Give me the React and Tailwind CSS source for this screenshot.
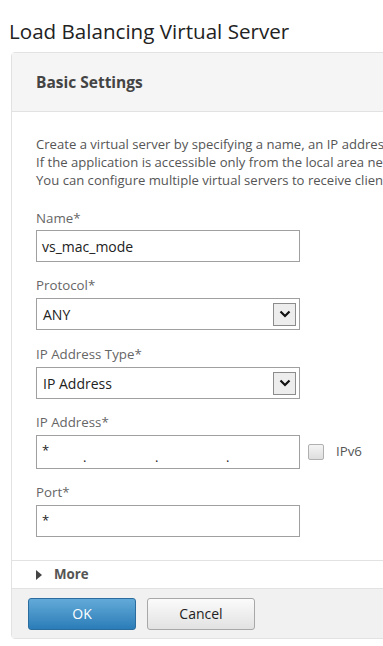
import { useState } from 'react';

function Label({ children }) {
    return <div className="h-[20px] text-[13.3px] leading-[20px] text-[#666]">{children}</div>;
}

function SelectBox({ value }) {
    return (
        <div className="mt-[3px] flex h-[32px] w-[264px] items-center justify-between border border-[#a0a0a0] bg-white pl-[6px] pr-[3px] text-[14px] text-[#222]">
            <span>{value}</span>
            <span className="flex h-[23px] w-[23px] items-center justify-center border border-[#8c8c8c] bg-[#ededed]">
                <svg width="12" height="8" viewBox="0 0 12 8">
                    <path d="M1.5 1.5 L6 6 L10.5 1.5" fill="none" stroke="#111" strokeWidth="2.2" />
                </svg>
            </span>
        </div>
    );
}

export default function App() {
    const [ipv6, setIpv6] = useState(false);

    return (
        <div className="h-[646px] w-[383px] overflow-hidden bg-white font-['Open_Sans',sans-serif]">
            <h1 className="pl-[9px] pt-[17px] text-[20.6px] leading-[28px] text-[#222]">
                Load Balancing Virtual Server
            </h1>

            <div className="ml-[11px] mt-[7px] w-[600px] rounded-[4px] border border-[#e2e2e2]">
                <div className="flex h-[59px] items-center border-b border-[#e2e2e2] bg-[#f5f5f5] pl-[24px] pt-[2px] text-[15.5px] font-bold text-[#444]">
                    Basic Settings
                </div>

                <div className="px-[24px] pb-[23px] pt-[23px]">
                    <div className="whitespace-nowrap text-[13.1px] leading-[18px] text-[#555]">
                        <p>Create a virtual server by specifying a name, an IP address, a port, and a protocol type.</p>
                        <p>If the application is accessible only from the local area network, the virtual server IP address can be private.</p>
                        <p>You can configure multiple virtual servers to receive client requests.</p>
                    </div>

                    <div className="mt-[19px]">
                        <Label>Name*</Label>
                        <div className="mt-[2px] flex h-[32px] w-[264px] items-center border border-[#a0a0a0] pl-[5px] text-[14px] text-[#222]">
                            vs_mac_mode
                        </div>
                    </div>

                    <div className="mt-[13px]">
                        <Label>Protocol*</Label>
                        <SelectBox value="ANY" />
                    </div>

                    <div className="mt-[14px]">
                        <Label>IP Address Type*</Label>
                        <SelectBox value="IP Address" />
                    </div>

                    <div className="mt-[13px]">
                        <Label>IP Address*</Label>
                        <div className="mt-[3px] flex items-center">
                            <div className="relative h-[34px] w-[264px] border border-[#a0a0a0] text-[13px] text-[#222]">
                                <span className="absolute left-[5px] top-[5px]">*</span>
                                <span className="absolute left-[46px] top-[12px]">.</span>
                                <span className="absolute left-[118px] top-[12px]">.</span>
                                <span className="absolute left-[189px] top-[12px]">.</span>
                            </div>
                            <button
                                type="button"
                                onClick={() => setIpv6(!ipv6)}
                                className="ml-[8px] h-[16px] w-[16px] rounded-[2px] border border-[#b0b0b0] bg-gradient-to-b from-[#f4f4f4] to-[#dedede]"
                            />
                            <span className="ml-[12px] text-[13.3px] text-[#555]">IPv6</span>
                        </div>
                    </div>

                    <div className="mt-[13px]">
                        <Label>Port*</Label>
                        <div className="mt-[3px] flex h-[32px] w-[264px] items-center border border-[#a0a0a0] pl-[5px] text-[13px] text-[#222]">
                            *
                        </div>
                    </div>
                </div>

                <div className="flex h-[29px] items-center border-y border-[#e2e2e2] pl-[24px]">
                    <svg width="7" height="10" viewBox="0 0 7 10">
                        <path d="M0 0 L6 5 L0 10 Z" fill="#444" />
                    </svg>
                    <span className="ml-[11px] text-[13.3px] font-bold text-[#555]">More</span>
                </div>

                <div className="flex h-[49px] items-center gap-[11px] bg-[#f1f1f1] pl-[16px]">
                    <button
                        type="button"
                        className="h-[32px] w-[108px] rounded-[3px] border border-[#2a6c9e] bg-gradient-to-b from-[#62aad8] to-[#2a7db8] text-[14px] text-white"
                    >
                        OK
                    </button>
                    <button
                        type="button"
                        className="h-[32px] w-[108px] rounded-[3px] border border-[#a8a8a8] bg-gradient-to-b from-[#fbfbfb] to-[#e2e2e2] text-[14px] text-[#222]"
                    >
                        Cancel
                    </button>
                </div>
            </div>
        </div>
    );
}
